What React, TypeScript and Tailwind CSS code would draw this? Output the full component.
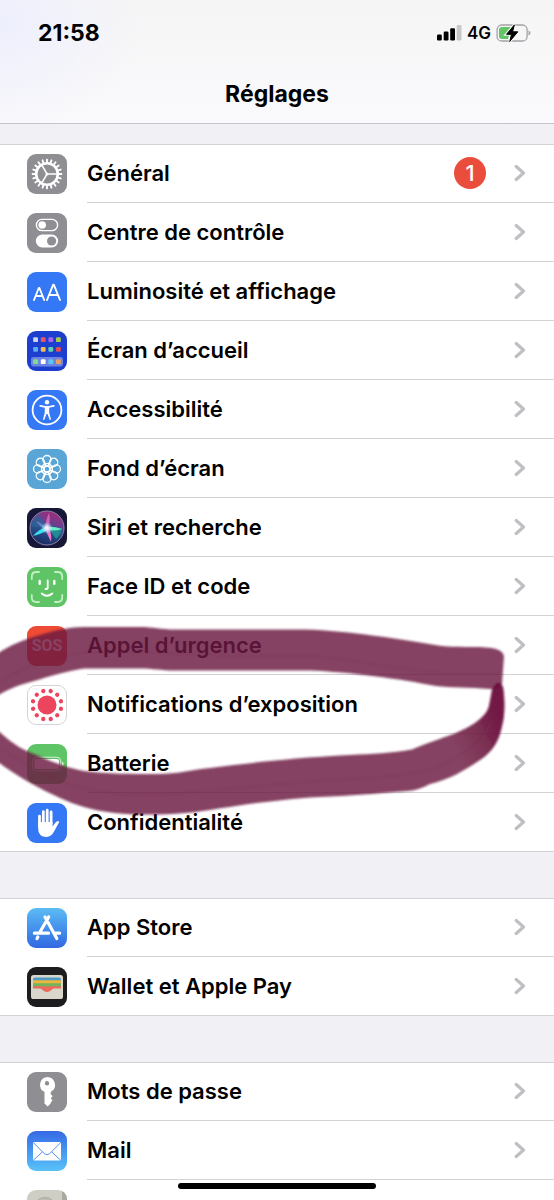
import type { ReactNode } from "react";

function Tile({ className, children }: { className: string; children: ReactNode }) {
  return (
    <span className={`block size-10 shrink-0 overflow-hidden rounded-[9px] ${className}`}>
      <svg viewBox="0 0 40 40" className="block size-full" aria-hidden="true">
        {children}
      </svg>
    </span>
  );
}

const ring = (n: number, offset = 0) =>
  Array.from({ length: n }, (_, i) => offset + (i * 360) / n);

function GeneralIcon() {
  return (
    <Tile className="bg-[#8e8e93]">
      <g stroke="#fff" fill="none">
        {ring(20).map((a) => (
          <path key={a} d="M20 8V5.6" strokeWidth="1.9" strokeLinecap="round" transform={`rotate(${a} 20 20)`} />
        ))}
        <circle cx="20" cy="20" r="10.8" strokeWidth="2.6" />
        {[90, 210, 330].map((a) => (
          <path key={a} d="M20 19V9.5" strokeWidth="1.6" transform={`rotate(${a} 20 20)`} />
        ))}
      </g>
      <circle cx="20" cy="20" r="1.5" fill="#fff" />
    </Tile>
  );
}

function ControlIcon() {
  return (
    <Tile className="bg-[#8e8e93]">
      <rect x="9.4" y="6.4" width="21.2" height="11.2" rx="5.6" fill="none" stroke="#fff" strokeWidth="1.4" />
      <circle cx="15.2" cy="12" r="3.8" fill="#fff" />
      <rect x="8.8" y="21.5" width="22.4" height="13" rx="6.5" fill="#fff" />
      <circle cx="24.6" cy="28" r="4.6" fill="#8e8e93" />
    </Tile>
  );
}

function DisplayIcon() {
  return (
    <Tile className="bg-[#3478f6]">
      <g fill="none" stroke="#fff" strokeLinecap="round" strokeLinejoin="round">
        <path d="M7 28l4.8-12h.6l4.8 12M8.7 24h6.8" strokeWidth="1.9" />
        <path d="M20 28l6.2-15.4h.6L33 28M22.1 23h8.8" strokeWidth="1.9" />
      </g>
    </Tile>
  );
}

const homeDots = [
  ["#c9d7ee", "#e8566b", "#a566ee", "#a4cf4a"],
  ["#5bb0f2", "#f5bd4b", "#5fcfae", "#e64a4e"],
];
const dockDots = ["#7fdc8d", "#ffffff", "#5cc8f5", "#eda05a"];

function HomeScreenIcon() {
  return (
    <Tile className="bg-[#1d3fd0]">
      {homeDots.map((row, r) =>
        row.map((fill, c) => (
          <rect key={`${r}-${c}`} x={6.2 + c * 7.6} y={6.3 + r * 9.7} width="4.8" height="4.8" rx="1.2" fill={fill} />
        )),
      )}
      <rect x="4" y="26" width="32" height="9.4" rx="2.4" fill="#6d83e2" />
      {dockDots.map((fill, c) => (
        <rect key={fill} x={6.2 + c * 7.6} y="28.3" width="4.8" height="4.8" rx="1.2" fill={fill} />
      ))}
    </Tile>
  );
}

function AccessibilityIcon() {
  return (
    <Tile className="bg-[#3478f6]">
      <circle cx="20" cy="20" r="14.4" fill="none" stroke="#fff" strokeWidth="1.8" />
      <circle cx="20" cy="12.3" r="2.2" fill="#fff" />
      <path d="M13.2 15.8l5 1h3.6l5-1" fill="none" stroke="#fff" strokeWidth="1.7" strokeLinecap="round" />
      <path d="M17.8 16.5h4.4v6.5l1.9 6.6-1.3.5-2.3-6.2h-1l-2.3 6.2-1.3-.5 1.8-6.6z" fill="#fff" />
    </Tile>
  );
}

function WallpaperIcon() {
  return (
    <Tile className="bg-[#59a5d6]">
      <g fill="none" stroke="#fff" strokeWidth="1.3">
        {ring(8).map((a) => (
          <circle key={a} cx="20" cy="10.6" r="4.1" transform={`rotate(${a} 20 20)`} />
        ))}
        {ring(8).map((a) => (
          <path key={a} d="M18 13.8Q18.4 16.8 20 17Q21.6 16.8 22 13.8" transform={`rotate(${a} 20 20)`} />
        ))}
        <circle cx="20" cy="20" r="3" />
      </g>
    </Tile>
  );
}

function SiriIcon() {
  return (
    <Tile className="bg-[#171838]">
      <defs>
        <linearGradient id="siri-ball" x1="0.7" y1="0" x2="0.4" y2="1">
          <stop offset="0" stopColor="#a02c74" />
          <stop offset="0.3" stopColor="#793a8c" />
          <stop offset="0.55" stopColor="#28558e" />
          <stop offset="1" stopColor="#1c2a62" />
        </linearGradient>
        <radialGradient id="siri-core">
          <stop offset="0" stopColor="#fff" />
          <stop offset="0.4" stopColor="#e6f4ff" stopOpacity="0.75" />
          <stop offset="1" stopColor="#b7d8ff" stopOpacity="0" />
        </radialGradient>
        <filter id="siri-soft" x="-20%" y="-20%" width="140%" height="140%">
          <feGaussianBlur stdDeviation="0.7" />
        </filter>
      </defs>
      <circle cx="20" cy="20" r="17" fill="url(#siri-ball)" stroke="#8a83ac" strokeWidth="1" />
      <g filter="url(#siri-soft)">
        <path d="M20 20L4 18Q6 10 12 6z" fill="#286498" opacity="0.7" />
        <path d="M21 20L35 20Q34 27 29 31z" fill="#1f9d94" opacity="0.75" />
        <path d="M21 18Q12 21 6 28Q15 26 22 21z" fill="#3bdff0" />
        <path d="M18 19Q27 18 35 21Q26 24 18 21z" fill="#67edc6" />
        <path d="M18 20Q21 28 24 34Q25 27 22 19z" fill="#ee78c8" />
        <path d="M18 20Q19 11 22 5Q24 13 21 20z" fill="#ec73c7" opacity="0.7" />
        <path d="M20 21Q14 14 9 13Q12 18 19 22z" fill="#9aa5ed" opacity="0.5" />
      </g>
      <circle cx="20" cy="20" r="6" fill="url(#siri-core)" />
    </Tile>
  );
}

function FaceIdIcon() {
  return (
    <Tile className="bg-[#5fc466]">
      <g fill="none" strokeLinecap="round">
        <path
          d="M4.8 12V9.5Q4.8 5 9.3 5H12M28 5h2.7Q35.2 5 35.2 9.5V12M35.2 28v2.5Q35.2 35 30.7 35H28M12 35H9.3Q4.8 35 4.8 30.5V28"
          stroke="#c2efc3"
          strokeWidth="1.8"
        />
        <path d="M12.7 14v2.7M27.3 14v2.7" stroke="#fff" strokeWidth="2.4" />
        <path d="M20.7 13.5v7.2Q20.7 22 19.3 22H18.5" stroke="#fff" strokeWidth="1.9" />
        <path d="M14.8 26.5Q20 31 25.2 26.5" stroke="#fff" strokeWidth="2.1" />
      </g>
    </Tile>
  );
}

function SosIcon() {
  return (
    <span className="flex size-10 shrink-0 items-center justify-center rounded-[9px] bg-[#ee4b34] font-['Roboto',sans-serif] text-[16px] font-bold text-white">
      SOS
    </span>
  );
}

function ExposureIcon() {
  return (
    <Tile className="border border-[#d5d5d8] bg-white">
      <circle cx="20" cy="20" r="10" fill="#ec465e" />
      {ring(12, 15).map((a) => (
        <circle key={a} cx="20" cy="4.8" r="2.3" fill="#ec465e" transform={`rotate(${a} 20 20)`} />
      ))}
    </Tile>
  );
}

function BatteryTileIcon() {
  return (
    <Tile className="bg-[#5fc466]">
      <rect x="5.7" y="13.2" width="28" height="13.6" rx="3.6" fill="none" stroke="#d8f3d8" strokeWidth="1" />
      <rect x="7.5" y="15" width="24.4" height="10" rx="1.8" fill="#fff" />
      <path d="M35 17.8q1.8.4 1.8 2.200t-1.800 2.200z" fill="#d8f3d8" />
    </Tile>
  );
}

function PrivacyIcon() {
  return (
    <Tile className="bg-[#3478f6]">
      <path
        d="M12.5 23V13.200M16.300 21V8.600M20.200 21V7.200M24.100 21V9"
        fill="none"
        stroke="#fff"
        strokeWidth="2.800"
        strokeLinecap="round"
      />
      <path
        d="M11.100 19H25.500V23.600L28.400 19.700C29.600 18.100 31.700 17.800 32.200 18.600Q32.400 19 31.700 20L27 28.600Q24.400 34 19.600 34Q11.100 34 11.100 25z"
        fill="#fff"
      />
    </Tile>
  );
}

function AppStoreIcon() {
  return (
    <Tile className="bg-linear-to-b from-[#5cbbf3] to-[#3467e2]">
      <path
        d="M21.700 9L12.800 24.300M18 9L29.800 30.500M7.400 25.200H21.500M28 25.200h4.600M10.800 29L10 30.600"
        fill="none"
        stroke="#fff"
        strokeWidth="3.200"
        strokeLinecap="round"
      />
    </Tile>
  );
}

function WalletIcon() {
  return (
    <Tile className="bg-[#1d1d1f]">
      <rect x="4" y="8" width="32" height="24" rx="2.600" fill="#d9d6cc" />
      <path d="M6 12.500Q6 10.500 8 10.500H32Q34 10.500 34 12.500V14H6z" fill="#4f9ac7" />
      <path d="M6 13.300H34V17H6z" fill="#e9b63e" />
      <path d="M6 16.300H34V20H6z" fill="#72b45a" />
      <path d="M6 19.300H34V21.500H27Q25.500 21.500 24.500 23Q20 27 15.500 23Q14.500 21.500 13 21.500H6z" fill="#ea6b5c" />
    </Tile>
  );
}

function KeyIcon() {
  return (
    <Tile className="bg-[#8e8e93]">
      <path
        fillRule="evenodd"
        d="M20 5a8 8 0 0 1 3.700 15.100V22l2 2.200-2 2.100 1.800 2.200-1.800 2V31.500L20.600 34.500 17.500 31.500V20.100A8 8 0 0 1 20 5zM20 9.100a2.200 2.200 0 1 0 .01 0z"
        fill="#fff"
      />
    </Tile>
  );
}

function MailIcon() {
  return (
    <Tile className="bg-linear-to-b from-[#3769e4] to-[#5ac2f8]">
      <rect x="6" y="11" width="28" height="18.500" rx="1.600" fill="#fff" />
      <path
        d="M6.500 11.800L17.300 22.600Q20 25 22.700 22.600L33.500 11.800M6.600 29L15.500 20.800M33.400 29L24.500 20.800"
        fill="none"
        stroke="#5690ea"
        strokeWidth="1"
      />
    </Tile>
  );
}

function ContactsIcon() {
  return (
    <Tile className="bg-[#cfcec4]">
      <rect x="35" width="5" height="40" fill="#aaa99f" />
      <circle cx="18" cy="19" r="11.500" fill="#bdbcb4" stroke="#a9a8a0" strokeWidth="1" />
      <circle cx="18" cy="15" r="5" fill="#96958d" />
    </Tile>
  );
}

type Item = { label: string; icon: ReactNode; badge?: number };

const groups: Item[][] = [
  [
    { label: "Général", icon: <GeneralIcon />, badge: 1 },
    { label: "Centre de contrôle", icon: <ControlIcon /> },
    { label: "Luminosité et affichage", icon: <DisplayIcon /> },
    { label: "Écran d’accueil", icon: <HomeScreenIcon /> },
    { label: "Accessibilité", icon: <AccessibilityIcon /> },
    { label: "Fond d’écran", icon: <WallpaperIcon /> },
    { label: "Siri et recherche", icon: <SiriIcon /> },
    { label: "Face ID et code", icon: <FaceIdIcon /> },
    { label: "Appel d’urgence", icon: <SosIcon /> },
    { label: "Notifications d’exposition", icon: <ExposureIcon /> },
    { label: "Batterie", icon: <BatteryTileIcon /> },
    { label: "Confidentialité", icon: <PrivacyIcon /> },
  ],
  [
    { label: "App Store", icon: <AppStoreIcon /> },
    { label: "Wallet et Apple Pay", icon: <WalletIcon /> },
  ],
  [
    { label: "Mots de passe", icon: <KeyIcon /> },
    { label: "Mail", icon: <MailIcon /> },
    { label: "", icon: <ContactsIcon /> },
  ],
];

function Row({ label, icon, badge }: Item) {
  return (
    <li className="group">
      <a href="#" aria-label={label || "Contacts"} className="flex h-[59px] items-stretch pl-[27px]">
        <span className="flex items-center">{icon}</span>
        <span className="ml-5 flex flex-1 items-center border-b border-[#d3d3d6] pr-7 group-last:border-transparent">
          <span className="flex-1 text-[22px] font-semibold whitespace-nowrap">{label}</span>
          {badge !== undefined && (
            <span className="mr-7 flex size-8 items-center justify-center rounded-full bg-[#eb4d3d] text-[22px] font-medium text-white">
              {badge}
            </span>
          )}
          <svg viewBox="0 0 12 18" className="h-[18px] w-3" fill="none" aria-hidden="true">
            <path d="M2.200 2.500L9.500 9L2.200 15.500" stroke="#c0c0c4" strokeWidth="3.200" strokeLinecap="round" strokeLinejoin="round" />
          </svg>
        </span>
      </a>
    </li>
  );
}

function StatusBar() {
  return (
    <div className="flex h-[66px] items-center justify-between pr-[22px] pl-[38px]">
      <span className="text-[23px] font-bold">21:58</span>
      <span className="flex items-center gap-[5px]">
        <svg viewBox="0 0 25 16" className="h-4 w-[25px]" aria-hidden="true">
          <rect x="0" y="9.500" width="4.800" height="6" rx="1.200" />
          <rect x="6.700" y="6.500" width="4.800" height="9" rx="1.200" />
          <rect x="13.200" y="3.300" width="4.800" height="12.200" rx="1.200" />
          <rect x="19.700" y="0" width="4.800" height="15.500" rx="1.200" fill="#c8c8ca" />
        </svg>
        <span className="text-[17px] leading-5 font-semibold">4G</span>
        <svg viewBox="0 0 36 20" className="h-5 w-9" aria-hidden="true">
          <rect x="1.100" y="2" width="30" height="16" rx="4.600" fill="none" stroke="#a3a3a5" strokeWidth="1.300" />
          <path d="M6.200 4H15.500L12 16H6.200Q3 16 3 13.300V6.700Q3 4 6.200 4z" fill="#64c466" />
          <path d="M32.500 7.500q2 .6 2 2.500t-2 2.500z" fill="#a3a3a5" />
          <path d="M18.300 2L10.500 11.300h5L13.800 18.400 21.800 8.800h-5.200z" stroke="#f8f8f9" strokeWidth="3" />
          <path d="M18.300 2L10.500 11.300h5L13.800 18.400 21.800 8.800h-5.200z" stroke="#000" strokeWidth="1" />
        </svg>
      </span>
    </div>
  );
}

function MarkerCircle() {
  return (
    <svg
      viewBox="0 610 554 220"
      className="pointer-events-none absolute top-[610px] left-0 h-[220px] w-full"
      preserveAspectRatio="none"
      aria-hidden="true"
    >
      <defs>
        <filter id="marker-soft" x="-5%" y="-5%" width="110%" height="110%">
          <feGaussianBlur stdDeviation="0.800" />
        </filter>
        <linearGradient id="marker-dark" x1="0.450" y1="0.600" x2="0.950" y2="0.350">
          <stop offset="0" stopColor="#6b0e3a" stopOpacity="0" />
          <stop offset="1" stopColor="#6b0e3a" stopOpacity="0.750" />
        </linearGradient>
      </defs>
      <g filter="url(#marker-soft)">
        <path
          d="M-6 656C8 646 22 640 40 635C56 630 70 627 84 627H140C154 627 160 629.500 175 629.500H305C350 631 400 639 438 645.500C456 648 476 646 492 648Q503 650 504 656L502 684Q499 690 490 689C470 687 450 688 436 686C400 679 350 672 310 670.500H175C160 670.500 154 668.500 140 668.500H84C68 671 50 676 34 681C18 685 6 690 -6 698z"
          fill="#6b1a40"
          fillOpacity="0.820"
        />
        <path
          d="M-6 727C8 740 18 748 34 754C48 760 66 768 84 771C108 774 130 774 158 774C178 774 190 770 210 768C250 763 290 758 350 755C372 754 392 753 412 749.500C424 744 440 739 456 733C470 727 486 718 489 706L492 690Q498 677 503 687C505 700 505 716 502 726C499 742 492 752 480 760C464 771 448 780 430 784C422 788 416 790.500 408 791C380 793 360 795 342 796C310 797 290 799 266 802C235 805 210 811 185 813C160 815 135 815 115 813C90 810 76 805 60 798C38 788 16 776 -6 759z"
          fill="#6b1a40"
          fillOpacity="0.820"
        />
        <path
          d="M412 749.500C424 744 440 739 456 733C470 727 486 718 489 706L492 690Q498 677 503 687C505 700 505 716 502 726C499 742 492 752 480 760C464 771 448 780 430 784Z"
          fill="url(#marker-dark)"
        />
        <g fill="none" stroke="#64264c" strokeWidth="2" strokeOpacity="0.140">
          <path d="M0 681C30 664 60 654 90 652H145C200 657 260 655 310 656C360 660 400 670 440 673H500" />
          <path d="M4 750C50 784 90 796 160 795C220 790 280 783 350 779C390 778 420 772 430 770C460 758 482 744 494 718" />
        </g>
      </g>
    </svg>
  );
}

export default function App() {
  return (
    <div className="relative flex h-screen flex-col overflow-hidden bg-[#f0f0f5] font-['Inter','Liberation_Sans',sans-serif] text-black">
      <header className="shrink-0 border-b border-[#c4c4ca] bg-linear-to-b from-[#f5f5f6] to-[#fafafc]">
        <div className="bg-[radial-gradient(ellipse_140px_110px_at_0_25px,#eeeffd,transparent)]">
          <StatusBar />
          <h1 className="flex h-[57px] items-center justify-center text-[23px] font-bold">Réglages</h1>
        </div>
      </header>
      <main className="flex shrink-0 flex-col gap-[46px] pt-5">
        {groups.map((items) => (
          <ul
            key={items[0].label}
            className="bg-white shadow-[inset_0_1px_0_#d3d3d6,inset_0_-1px_0_#d3d3d6]"
          >
            {items.map((item) => (
              <Row key={item.label} {...item} />
            ))}
          </ul>
        ))}
      </main>
      <MarkerCircle />
      <div className="absolute inset-x-0 bottom-[11px] mx-auto h-[6px] w-[198px] rounded-full bg-black" />
    </div>
  );
}
